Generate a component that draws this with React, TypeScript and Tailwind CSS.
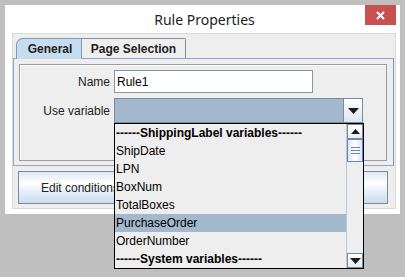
import React from "react";

const font = { fontFamily: '"Liberation Sans", Arial, sans-serif' };

function TriDown({ className = "" }: { className?: string }) {
  return (
    <svg width="11" height="6" viewBox="0 0 11 6" className={className}>
      <polygon points="0,0 11,0 5.5,6" fill="#1a1a1a" />
    </svg>
  );
}
function TriUp() {
  return (
    <svg width="9" height="5" viewBox="0 0 9 5">
      <polygon points="0,5 9,5 4.5,0" fill="#1a1a1a" />
    </svg>
  );
}

export default function App() {
  const items: { t: string; bold?: boolean; sel?: boolean }[] = [
    { t: "------ShippingLabel variables------", bold: true },
    { t: "ShipDate" },
    { t: "LPN" },
    { t: "BoxNum" },
    { t: "TotalBoxes" },
    { t: "PurchaseOrder", sel: true },
    { t: "OrderNumber" },
    { t: "------System variables------", bold: true },
  ];
  return (
    <div className="relative w-[405px] h-[277px] bg-[#bfbfbf] pt-[5px] pl-[5px] overflow-hidden" style={font}>
      <div className="w-[395px] h-[209px] bg-white flex flex-col">
        {/* title bar */}
        <div className="h-[28px] flex items-start relative shrink-0">
          <div
            className="flex-1 text-center text-[14px] leading-[20px] pt-[5px] pl-[4px] text-[#222]"
            style={{ fontFamily: '"Noto Sans", "Open Sans", sans-serif' }}
          >
            Rule Properties
          </div>
          <div className="absolute right-[4px] top-0 w-[31px] h-[20px] bg-[#c75050] flex items-center justify-center">
            <svg width="9" height="9" viewBox="0 0 9 9">
              <path d="M1 1 L8 8 M8 1 L1 8" stroke="white" strokeWidth="2" />
            </svg>
          </div>
        </div>
        {/* content pane */}
        <div className="ml-[7px] w-[384px] h-[176px] bg-[#eeeeee] border border-[#d9d9d9] flex flex-col">
          {/* tabs */}
          <div className="flex items-end pl-[3px] pt-[3px] h-[24px] text-[12px] font-bold text-[#222]">
            <div className="h-[21px] w-[66px] bg-[#c8dcf0] border border-b-0 border-[#7e97bd] rounded-tl-[7px] flex items-center justify-center pl-[2px] relative z-10 -mb-px">
              General
            </div>
            <div className="h-[20px] w-[104px] bg-[#eeeeee] border border-l-0 border-b-0 border-[#8e8e8e] rounded-tr-[2px] flex items-center justify-center">
              Page Selection
            </div>
          </div>
          {/* tab body */}
          <div className="w-[381px] h-[108px] border border-[#8ea7cf] border-r-[#7d95bd] p-[5px] pr-[5px]">
            <div className="h-[97px] w-[368px] border border-[#9c9c9c] shadow-[inset_1px_1px_0_#ffffff] pt-[5px] text-[12px] text-[#222]">
              <div className="flex items-center h-[23px]">
                <div className="w-[94px] text-right pr-[4px]">Name</div>
                <div className="w-[199px] h-[23px] bg-white border border-[#8797a8] flex items-center pl-[2px] text-black">
                  Rule1
                </div>
              </div>
              <div className="flex items-center h-[25px] mt-[5px]">
                <div className="w-[94px] text-right pr-[4px]">Use variable</div>
                <div className="w-[249px] h-[25px] bg-[#a3b8cc] border border-[#7a8a99] flex justify-end">
                  <div className="w-[19px] h-full border-l border-[#7a8a99] bg-[linear-gradient(to_bottom,#ffffff,#dce7f2)] flex items-center justify-center">
                    <TriDown />
                  </div>
                </div>
              </div>
            </div>
          </div>
          {/* buttons */}
          <div className="flex gap-[10px] pl-[5px] pt-[5px] text-[12px] text-[#222]">
            <div className="w-[180px] h-[33px] border border-[#7a8a99] bg-[linear-gradient(to_bottom,#dde8f3_0%,#ffffff_35%,#c8dbee_100%)] flex items-center pl-[22px]">
              Edit conditions...
            </div>
            <div className="w-[180px] h-[33px] border border-[#7a8a99] bg-[linear-gradient(to_bottom,#dde8f3_0%,#ffffff_35%,#c8dbee_100%)]" />
          </div>
        </div>
      </div>

      {/* dropdown popup */}
      <div className="absolute left-[114px] top-[123px] w-[250px] h-[146px] border border-black bg-[#eeeeee] flex text-[12px]">
        <div className="flex-1 flex flex-col">
          {items.map((it, i) => (
            <div
              key={i}
              className={`h-[18px] leading-[18px] pl-[1px] whitespace-nowrap ${it.bold ? "font-bold text-black" : "text-black"} ${it.sel ? "bg-[#a3b8cc] text-[#333]" : ""}`}
            >
              {it.t}
            </div>
          ))}
        </div>
        <div className="w-[17px] h-full border-l border-[#b8c6d6] bg-[#eeeeee] flex flex-col">
          <div className="h-[15px] border border-[#7a8a99] bg-[linear-gradient(to_bottom,#ffffff,#e4ebf3)] flex items-center justify-center">
            <TriUp />
          </div>
          <div className="h-[23px] border border-[#6a85b8] bg-[linear-gradient(to_right,#dbe6f3,#ffffff_50%,#dbe6f3)] flex flex-col items-center justify-center gap-[2px]">
            <div className="w-[9px] h-px bg-[#6a85b8]" />
            <div className="w-[9px] h-px bg-[#6a85b8]" />
            <div className="w-[9px] h-px bg-[#6a85b8]" />
          </div>
          <div className="flex-1" />
          <div className="h-[15px] border border-[#7a8a99] bg-[linear-gradient(to_bottom,#ffffff,#e4ebf3)] flex items-center justify-center">
            <TriDown />
          </div>
        </div>
      </div>
    </div>
  );
}
